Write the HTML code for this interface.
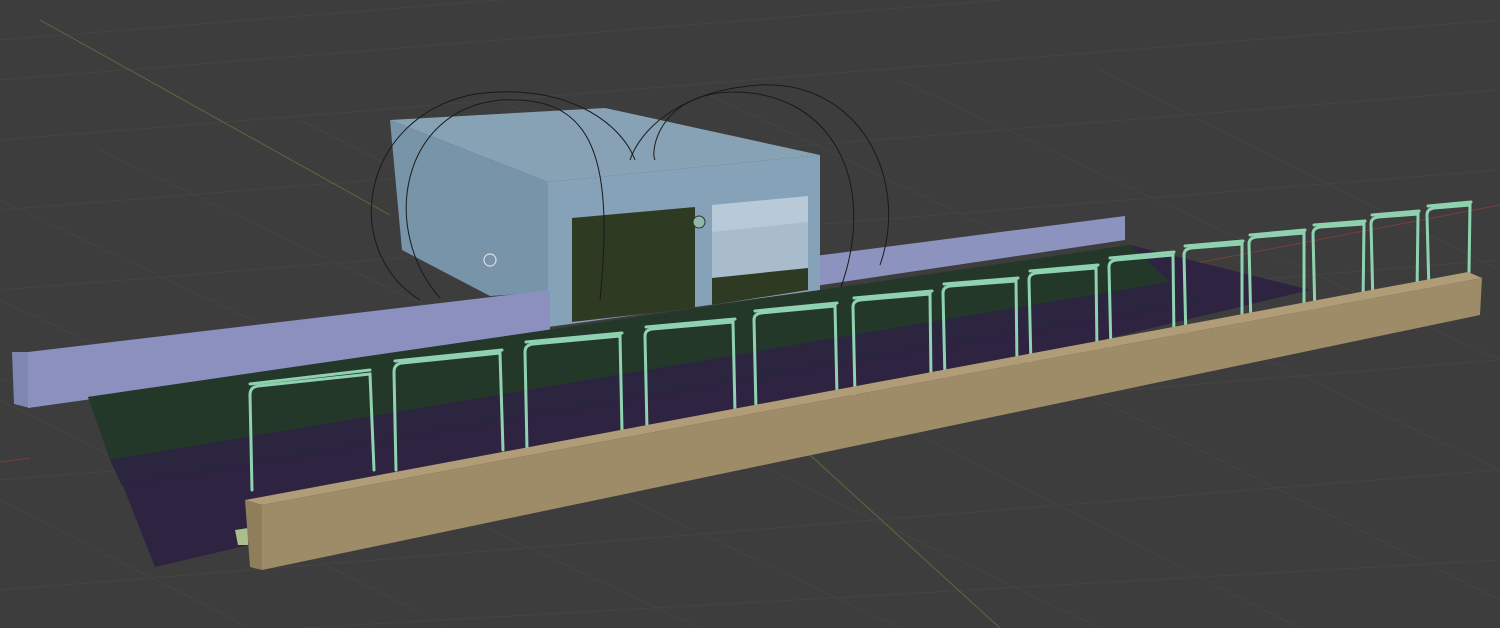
<!DOCTYPE html>
<html><head><meta charset="utf-8"><style>html,body{margin:0;padding:0;background:#3d3d3d;overflow:hidden}svg{display:block}</style></head><body>
<svg width="1500" height="628" viewBox="0 0 1500 628" xmlns="http://www.w3.org/2000/svg">
<rect width="1500" height="628" fill="#3d3d3d"/>
<g stroke="#444" stroke-width="1" fill="none">
<path d="M0 80 L1500 -40 M0 140 L1500 20 M0 210 L1500 90 M0 290 L1500 170 M0 380 L1500 260 M0 480 L1500 360 M0 590 L1500 470 M300 628 L1500 560 M0 40 L1500 -80"/>
<path d="M0 300 L700 628 M0 200 L900 628 M100 150 L1100 628 M300 120 L1300 628 M500 100 L1500 600 M700 90 L1500 470 M900 80 L1500 360 M1100 70 L1500 270 M0 400 L450 628 M0 500 L250 628"/>
</g>
<path d="M40 20 L390 215" stroke="#5a6b3a" stroke-width="1"/>
<path d="M810 455 L1000 628" stroke="#5a6b3a" stroke-width="1"/>
<path d="M1160 270 L1500 205" stroke="#7a3c3c" stroke-width="1"/>
<path d="M0 462 L30 458" stroke="#7a3c3c" stroke-width="1"/>
<polygon points="815,256 1125,216 1125,240 815,286" fill="#8c93be"/>
<polygon points="390,120 605,108 820,155 548,182" fill="#88a2b5"/>
<polygon points="390,120 548,182 548,292 490,296 402,250" fill="#7894a9"/>
<polygon points="548,182 820,155 820,290 548,327" fill="#86a2b8"/>
<polygon points="572,218 695,207 695,308 572,322" fill="#2e3a22"/>
<polygon points="712,205 808,196 808,290 712,305" fill="#a8bccb"/>
<polygon points="712,205 808,196 808,222 712,232" fill="#b8cad7"/>
<polygon points="712,278 808,268 808,290 712,305" fill="#2e3a22"/>
<circle cx="699" cy="222" r="6" fill="#8fb8a8" stroke="#333" stroke-width="1"/>
<circle cx="490" cy="260" r="6" fill="none" stroke="#ddd" stroke-width="1.2"/>
<g stroke="#1a1a1a" stroke-width="1" fill="none">
<path d="M420 300 C340 250 360 120 470 95 C560 80 620 120 635 160"/>
<path d="M440 298 C380 230 400 110 500 100 C590 95 615 150 600 300"/>
<path d="M880 265 C910 180 860 80 760 85 C680 90 640 130 630 160"/>
<path d="M840 290 C880 180 830 90 730 92 C660 95 650 150 655 160"/>
</g>
<polygon points="12,352 30,352 30,408 14,404" fill="#7f86b0"/>
<polygon points="28,352 550,290 550,335 28,408" fill="#8b90bf"/>
<polygon points="88,397 1130,245 1310,290 270,540 155,567" fill="#2e2340"/>
<polygon points="88,397 1130,245 1170,282 110,460" fill="#24382a"/>
<polygon points="110,460 1170,282 1200,302 122,486" fill="#2b2540"/>
<g stroke="#8fd2b0" stroke-width="3" fill="none" stroke-linecap="round">
<path d="M252 490 L250 395 Q250 387 258 386 L370 374 L374 470"/><path d="M250 384 L370 370"/>
<path d="M396 470 L394 372 Q394 364 402 363 L500 353 L503 450"/><path d="M395 361 L502 350"/>
<path d="M527 450 L525 352 Q525 345 533 344 L620 336 L622 430"/><path d="M526 342 L622 333"/>
<path d="M647 430 L645 336 Q645 330 652 329 L733 322 L735 412"/><path d="M646 327 L735 319"/>
<path d="M756 410 L754 320 Q754 314 761 313 L835 306 L837 395"/><path d="M755 311 L837 303"/>
<path d="M855 395 L853 307 Q853 301 860 300 L930 294 L931 380"/><path d="M854 298 L932 291"/>
<path d="M945 380 L943 293 Q943 287 950 286 L1016 281 L1017 365"/><path d="M944 284 L1018 278"/>
<path d="M1031 365 L1029 280 Q1029 274 1036 273 L1096 268 L1097 352"/><path d="M1030 271 L1098 265"/>
<path d="M1111 352 L1109 267 Q1109 261 1116 260 L1173 255 L1174 340"/><path d="M1110 258 L1174 252"/>
<path d="M1186 340 L1184 255 Q1184 249 1191 248 L1242 244 L1242 328"/><path d="M1185 246 L1243 241"/>
<path d="M1251 327 L1249 244 Q1249 238 1256 237 L1304 233 L1304 316"/><path d="M1250 235 L1305 230"/>
<path d="M1315 316 L1313 234 Q1313 228 1320 227 L1364 224 L1363 305"/><path d="M1314 225 L1365 221"/>
<path d="M1373 305 L1371 224 Q1371 218 1378 217 L1418 214 L1417 295"/><path d="M1372 215 L1419 211"/>
<path d="M1429 292 L1427 215 Q1427 209 1434 208 L1470 205 L1469 272"/><path d="M1428 206 L1471 202"/>
</g>
<polygon points="235,530 248,528 248,545 238,545" fill="#a9bf8c"/>
<polygon points="245,500 1468,272 1482,278 262,505" fill="#b09d78"/>
<polygon points="245,500 262,505 262,570 250,567" fill="#8f7e5c"/>
<polygon points="262,505 1482,278 1480,315 262,570" fill="#9e8b68"/>
</svg>
</body></html>
